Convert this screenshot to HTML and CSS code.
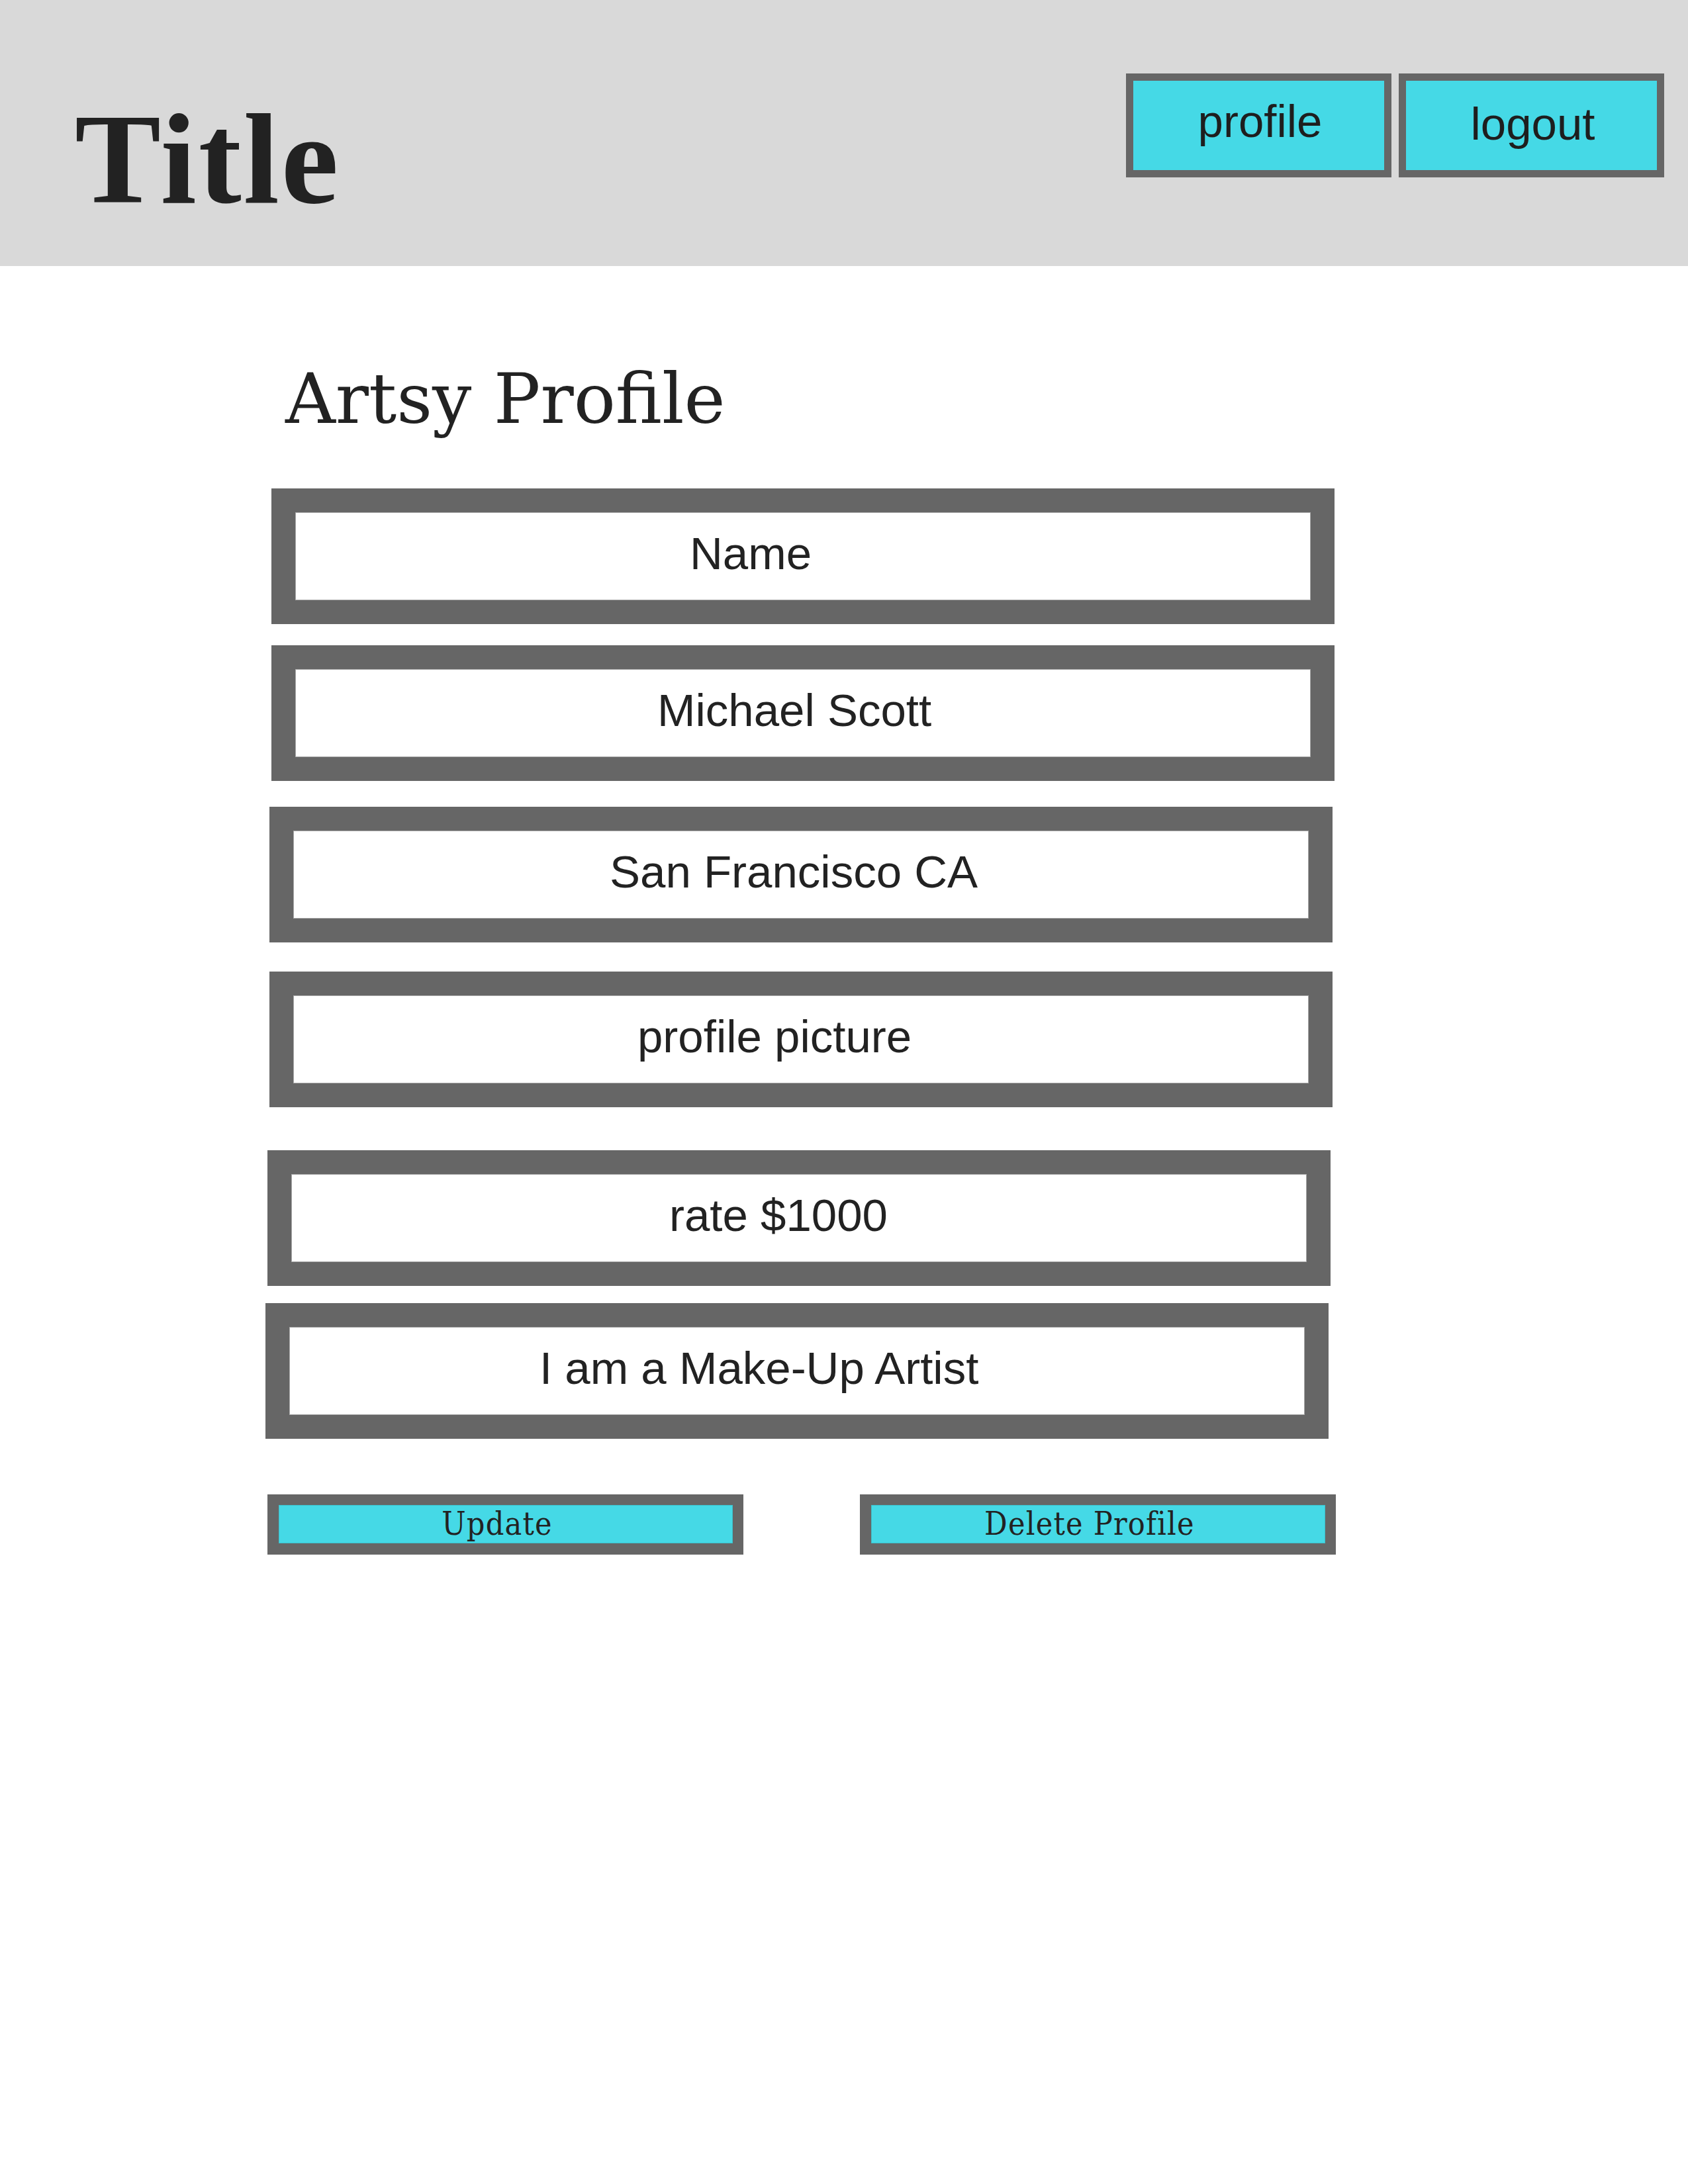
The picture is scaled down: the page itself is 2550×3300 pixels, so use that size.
FILE: index.html
```html
<!DOCTYPE html>
<html lang="en">
<head>
<meta charset="utf-8">
<title>Artsy Profile</title>
<link rel="stylesheet" href="styles.css">
</head>
<body>
<header class="topbar">
  <h1 class="brand">Title</h1>
  <nav class="nav">
    <a class="nav-btn nav-btn--profile">profile</a>
    <a class="nav-btn nav-btn--logout">logout</a>
  </nav>
</header>
<main class="content">
  <h2 class="page-title">Artsy Profile</h2>
  <div class="fields">
    <div class="field field--name"><div class="field-inner">Name</div></div>
    <div class="field field--fullname"><div class="field-inner">Michael Scott</div></div>
    <div class="field field--city"><div class="field-inner">San Francisco CA</div></div>
    <div class="field field--picture"><div class="field-inner">profile picture</div></div>
    <div class="field field--rate"><div class="field-inner">rate $1000</div></div>
    <div class="field field--bio"><div class="field-inner">I am a Make-Up Artist</div></div>
  </div>
  <div class="actions">
    <a class="action">Update</a>
    <a class="action">Delete Profile</a>
  </div>
</main>
</body>
</html>
```
FILE: styles.css
```css
body {
  margin: 0;
  background: #ffffff;
  color: #222222;
}

.topbar {
  height: 402px;
  background: #d9d9d9;
  display: flex;
  justify-content: space-between;
  align-items: flex-start;
}

.brand {
  margin: 143px 0 0 113px;
  font-family: "Liberation Serif", serif;
  font-weight: 700;
  font-size: 195px;
  letter-spacing: 3px;
  line-height: 1;
  color: #222222;
}

.nav {
  display: flex;
  gap: 11px;
  margin: 111px 36px 0 0;
}

.nav-btn {
  box-sizing: border-box;
  width: 401px;
  height: 157px;
  border: 11px solid #666666;
  background: #45d9e6;
  font-family: "Liberation Sans", sans-serif;
  font-size: 69px;
  line-height: normal;
  color: #1e1e1e;
  text-align: center;
  padding-top: 22px;
  padding-left: 4px;
}

.nav-btn--logout {
  padding-top: 26px;
}

.content {
  padding-left: 410px;
}

.page-title {
  margin: 142px 0 0 21px;
  font-family: "DejaVu Serif", serif;
  font-weight: 400;
  font-size: 105px;
  line-height: 118px;
  color: #222222;
}

.fields {
  margin-top: 76px;
  display: flex;
  flex-direction: column;
  align-items: flex-start;
}

.field {
  box-sizing: border-box;
  width: 1606px;
  height: 205px;
  border: 36px solid #666666;
}

.field-inner {
  box-sizing: border-box;
  height: 100%;
  background: #ffffff;
  box-shadow: inset 0 0 0 1px #a8a8a8;
  padding-top: 23px;
  font-family: "Liberation Sans", sans-serif;
  font-size: 69px;
  line-height: normal;
  color: #222222;
  white-space: nowrap;
}

.field--name .field-inner { padding-left: 596px; }

.field--fullname { margin-top: 32px; }
.field--fullname .field-inner { padding-left: 547px; }

.field--city { margin-top: 39px; margin-left: -3px; }
.field--city .field-inner { padding-left: 478px; }

.field--picture { margin-top: 44px; margin-left: -3px; }
.field--picture .field-inner { padding-left: 520px; }

.field--rate { margin-top: 65px; margin-left: -6px; }
.field--rate .field-inner { padding-left: 571px; }

.field--bio { margin-top: 26px; margin-left: -9px; }
.field--bio .field-inner { padding-left: 378px; }

.actions {
  display: flex;
  gap: 176px;
  margin: 84px 0 0 -6px;
}

.action {
  box-sizing: border-box;
  width: 719px;
  height: 91px;
  border-style: solid;
  border-color: #666666;
  border-width: 16px 16px 17px 17px;
  background: #45d9e6;
  box-shadow: inset 0 0 0 1px #3cc0cc;
  padding-right: 26px;
  font-family: "DejaVu Serif", serif;
  font-stretch: condensed;
  font-size: 48px;
  letter-spacing: 1.2px;
  line-height: 56px;
  color: #222222;
  text-align: center;
  white-space: nowrap;
}
```
